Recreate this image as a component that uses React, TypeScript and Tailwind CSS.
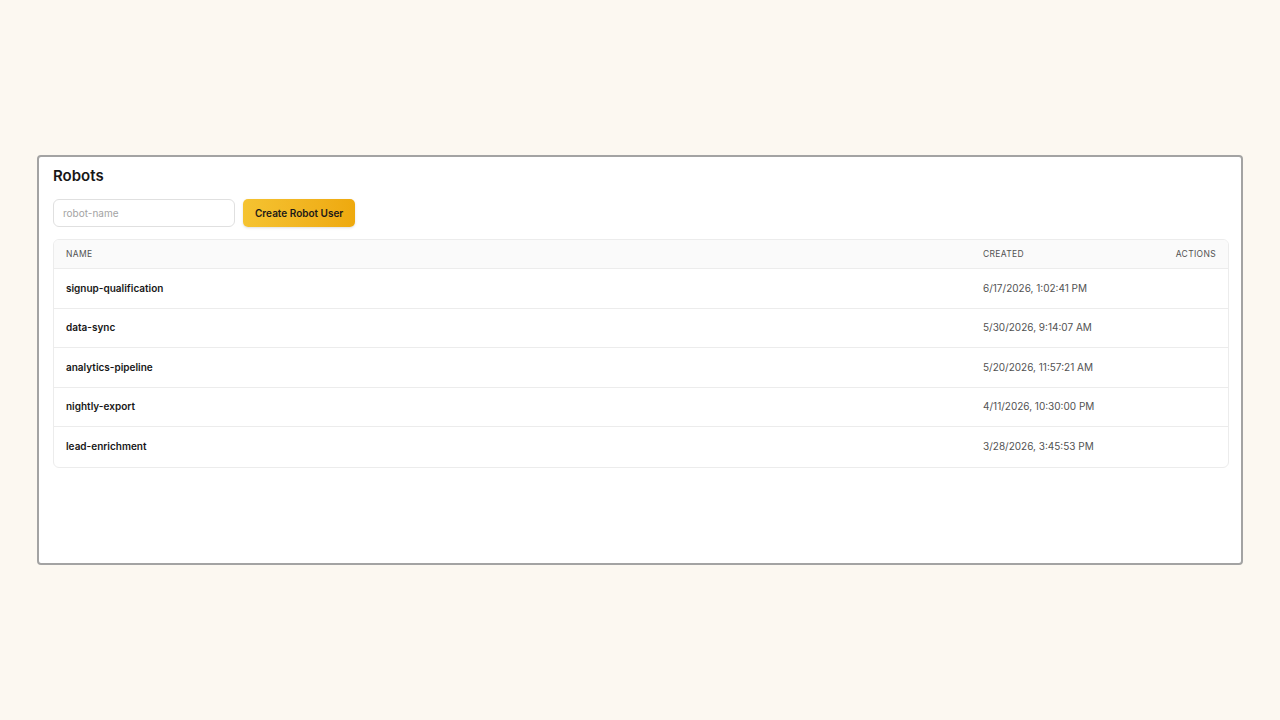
import React from 'react';

const robots = [
  { name: 'signup-qualification', created: '6/17/2026, 1:02:41 PM' },
  { name: 'data-sync', created: '5/30/2026, 9:14:07 AM' },
  { name: 'analytics-pipeline', created: '5/20/2026, 11:57:21 AM' },
  { name: 'nightly-export', created: '4/11/2026, 10:30:00 PM' },
  { name: 'lead-enrichment', created: '3/28/2026, 3:45:53 PM' },
];

const App: React.FC = () => {
  return (
    <div className="min-h-screen w-full bg-[#fcf8f1] pt-[155px] px-[37px] font-['Inter',sans-serif]">
      <div className="h-[410px] rounded-[4px] border-2 border-[#a3a3a3] bg-white pl-[14px] pr-[12px] pt-[9px]">
        <h1 className="text-[15px] font-semibold leading-[20px] text-[#171717]">Robots</h1>

        <div className="mt-[13px] flex items-center gap-2">
          <input
            placeholder="robot-name"
            className="h-[28px] w-[182px] rounded-[6px] border border-[#e0e0e0] bg-white px-[9px] text-[10px] text-[#171717] placeholder:text-[#a3a3a3] outline-none"
          />
          <button className="h-[28px] rounded-[5px] bg-gradient-to-r from-[#f5c331] to-[#eea90d] px-[12px] text-[10px] font-semibold text-[#1c1917] shadow-sm">
            Create Robot User
          </button>
        </div>

        <div className="mt-[12px] overflow-hidden rounded-[6px] border border-[#ececec]">
          <div className="flex h-[29px] items-center border-b border-[#ececec] bg-[#fafafa] px-[12px] text-[8.5px] uppercase tracking-[0.04em] text-[#525252]">
            <div className="flex-1">Name</div>
            <div className="w-[173px]">Created</div>
            <div className="w-[60px] text-right">Actions</div>
          </div>
          {robots.map((r, i) => (
            <div
              key={r.name}
              className={`flex h-[39.5px] items-center px-[12px] ${i < robots.length - 1 ? 'border-b border-[#ececec]' : ''}`}
            >
              <div className="flex-1 text-[10px] font-semibold text-[#171717]">{r.name}</div>
              <div className="w-[173px] text-[10px] text-[#525252]">{r.created}</div>
              <div className="w-[60px]" />
            </div>
          ))}
        </div>
      </div>
    </div>
  );
};

export default App;
